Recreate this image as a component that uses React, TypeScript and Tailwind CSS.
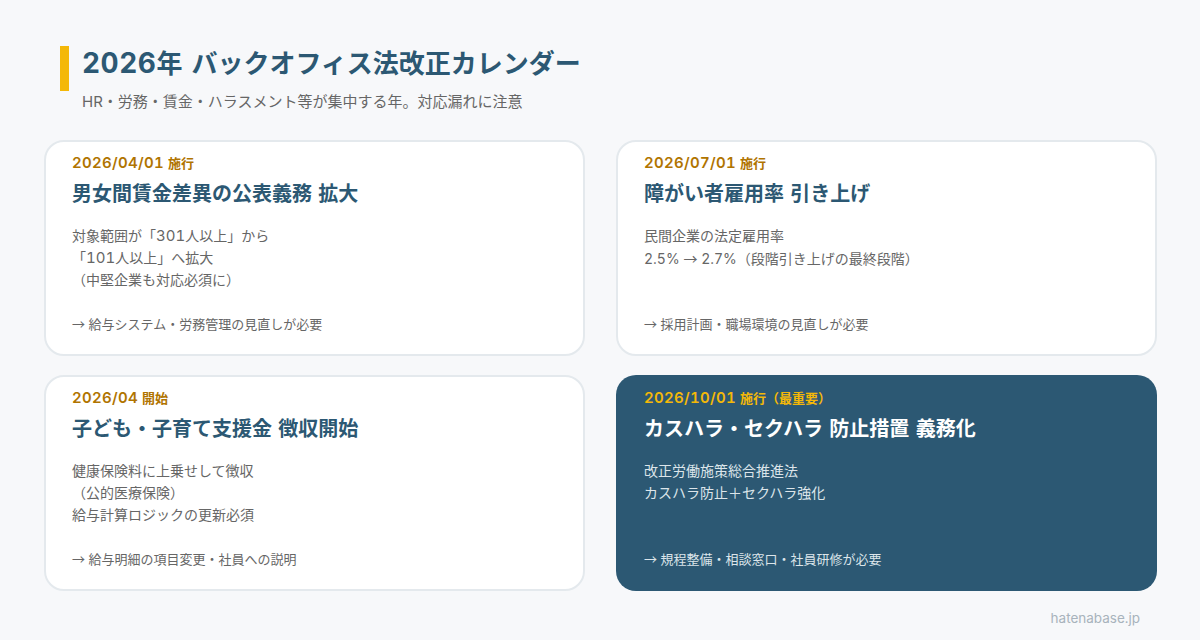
import type { ReactNode } from "react";

type CardProps = {
  date: string;
  tag: string;
  title: string;
  lines: ReactNode[];
  action: string;
  dark?: boolean;
};

function Card({ date, tag, title, lines, action, dark }: CardProps) {
  return (
    <div
      className={
        dark
          ? "h-[216px] rounded-[20px] bg-[#2c5873] pl-[28px] pr-4 pt-[13px] flex flex-col"
          : "h-[216px] rounded-[20px] border-2 border-[#e4e9ed] bg-white pl-[26px] pr-4 pt-[11px] flex flex-col"
      }
    >
      <div className={dark ? "flex items-baseline gap-[4px] h-[20px] leading-[20px] font-semibold text-[#f4b808]" : "flex items-baseline gap-[4px] h-[20px] leading-[20px] font-semibold text-[#b07400]"}>
        <span className="text-[15px] tracking-[0.3px]">{date}</span>
        <span className="text-[13px]">{tag}</span>
      </div>
      <div className={dark ? "mt-[6px] h-[30px] text-[20px] leading-[30px] font-bold [word-spacing:1px] text-white" : "mt-[6px] h-[30px] text-[20px] leading-[30px] font-bold [word-spacing:1px] text-[#2c5873]"}>
        {title}
      </div>
      <div className={dark ? "mt-[16px] text-[14px] leading-[22px] text-[#dce5ea]" : "mt-[16px] text-[14px] leading-[22px] text-[#666666]"}>
        {lines.map((l, i) => (
          <div key={i}>{l}</div>
        ))}
      </div>
      <div className={dark ? "mt-auto mb-[22px] text-[13px] leading-[20px] text-[#dce5ea]" : "mt-auto mb-[20px] text-[13px] leading-[20px] text-[#666666]"}>
        <span className="font-['Noto_Sans_CJK_JP',sans-serif]">→</span> {action}
      </div>
    </div>
  );
}

export default function App() {
  return (
    <div className="w-[1200px] h-[640px] overflow-hidden bg-[#f7f8fa] pl-[44px] pr-[43px] pt-[46px] flex flex-col tabular-nums font-['Inter','Noto_Sans_CJK_JP',sans-serif]">
      <div className="flex pl-[16px] gap-[13px]">
        <div className="w-[9px] h-[45px] bg-[#f4b808]" />
        <div>
          <div className="text-[26px] leading-[34px] font-bold [word-spacing:2px] text-[#2c5873]">
            <span className="text-[28px] tracking-[0.5px]">2026</span>年 バックオフィス法改正カレンダー
          </div>
          <div className="mt-[10px] text-[15px] leading-[22px] text-[#666666]">HR・労務・賃金・ハラスメント等が集中する年。対応漏れに注意</div>
        </div>
      </div>

      <div className="mt-[27px] grid grid-cols-2 gap-x-[31px] gap-y-[19px]">
        <Card
          date="2026/04/01"
          tag="施行"
          title="男女間賃金差異の公表義務 拡大"
          lines={[
            <>対象範囲が「<span className="text-[15px]">301</span>人以上」から</>,
            <>「<span className="text-[15px]">101</span>人以上」へ拡大</>,
            "（中堅企業も対応必須に）",
          ]}
          action="給与システム・労務管理の見直しが必要"
        />
        <Card
          date="2026/07/01"
          tag="施行"
          title="障がい者雇用率 引き上げ"
          lines={["民間企業の法定雇用率", <>2.5% <span className="font-['Noto_Sans_CJK_JP',sans-serif]">→</span> 2.7%（段階引き上げの最終段階）</>]}
          action="採用計画・職場環境の見直しが必要"
        />
        <Card
          date="2026/04"
          tag="開始"
          title="子ども・子育て支援金 徴収開始"
          lines={["健康保険料に上乗せして徴収", "（公的医療保険）", "給与計算ロジックの更新必須"]}
          action="給与明細の項目変更・社員への説明"
        />
        <Card
          dark
          date="2026/10/01"
          tag="施行（最重要）"
          title="カスハラ・セクハラ 防止措置 義務化"
          lines={["改正労働施策総合推進法", "カスハラ防止＋セクハラ強化"]}
          action="規程整備・相談窓口・社員研修が必要"
        />
      </div>

      <div className="mt-[17px] pr-[17px] text-right text-[13.5px] leading-[20px] text-[#a8b3bc]">hatenabase.jp</div>
    </div>
  );
}
